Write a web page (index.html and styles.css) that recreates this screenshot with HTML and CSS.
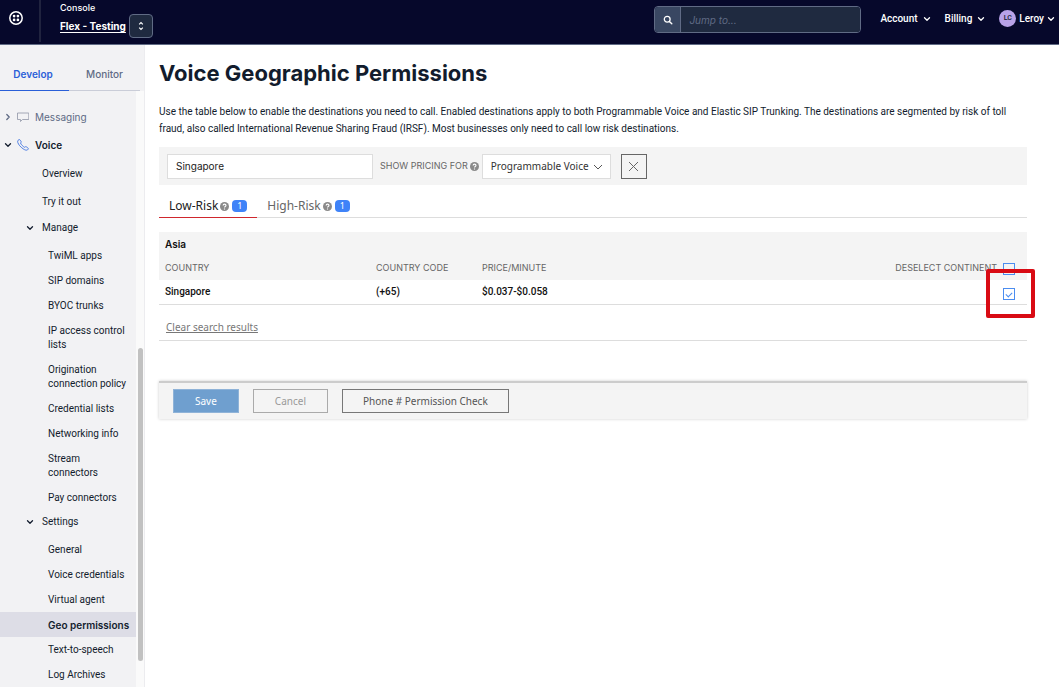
FILE: index.html
```html
<!DOCTYPE html>
<html lang="en">
<head>
<meta charset="utf-8">
<title>Voice Geographic Permissions</title>
<link rel="stylesheet" href="styles.css">
</head>
<body>
<svg class="defs" aria-hidden="true">
  <symbol id="chev" viewBox="0 0 8 8"><path d="M1.5 2.8 4 5.2l2.500-2.400" fill="none" stroke="currentColor" stroke-width="1.300" stroke-linecap="round" stroke-linejoin="round"/></symbol>
  <symbol id="help" viewBox="0 0 8 8"><circle cx="4" cy="4" r="4" fill="#8a8a8a"/><path d="M2.800 3.200c0-1.700 2.500-1.700 2.500 0 0 .8-1.300.8-1.300 1.700M4 5.800v.8" fill="none" stroke="#fff" stroke-width="1"/></symbol>
</svg>
<header class="topbar">
  <a class="logo" href="#" aria-label="Home">
    <svg width="14" height="14" viewBox="0 0 14 14"><circle cx="7" cy="7" r="6.200" fill="none" stroke="#fff" stroke-width="1.500"/><g fill="#fff"><circle cx="5.100" cy="5.100" r="1.350"/><circle cx="8.900" cy="5.100" r="1.350"/><circle cx="5.100" cy="8.900" r="1.350"/><circle cx="8.900" cy="8.900" r="1.350"/></g></svg>
  </a>
  <div class="account">
    <div class="account-names"><span class="console">Console</span><a class="project" href="#">Flex - Testing</a></div>
    <button class="switcher" aria-label="Switch account"><svg width="8" height="10" viewBox="0 0 8 10"><path d="M2.200 3.300 4 1.500l1.800 1.800M2.200 6.700 4 8.500l1.800-1.800" fill="none" stroke="#fff" stroke-width="1.200"/></svg></button>
  </div>
  <div class="search">
    <button class="search-btn" aria-label="Search"><svg width="10" height="10" viewBox="0 0 10 10"><circle cx="4.200" cy="4.200" r="2.900" fill="none" stroke="#fff" stroke-width="1.300"/><path d="m6.400 6.400 2.400 2.400" stroke="#fff" stroke-width="1.400" stroke-linecap="round"/></svg></button>
    <input class="search-input" type="text" placeholder="Jump to..." aria-label="Jump to">
  </div>
  <nav class="topmenu">
    <button class="menu-btn">Account <svg class="chev"><use href="#chev"/></svg></button>
    <button class="menu-btn">Billing <svg class="chev"><use href="#chev"/></svg></button>
    <button class="menu-btn user"><span class="avatar">LC</span>Leroy <svg class="chev"><use href="#chev"/></svg></button>
  </nav>
</header>
<div class="shell">
  <aside class="sidebar">
    <div class="side-tabs"><a class="side-tab on" href="#">Develop</a><a class="side-tab" href="#">Monitor</a></div>
    <div class="side-body">
      <nav class="tree">
        <a class="l1 muted" href="#"><svg class="chev right"><use href="#chev"/></svg><svg class="picto" viewBox="0 0 12 12"><path d="M.5 2h11.300v6.500H5.500L3.500 10.500v-2H.5z" fill="none" stroke="#8f94a6" stroke-width=".8" stroke-linejoin="round"/></svg>Messaging</a>
        <a class="l1 strong" href="#"><svg class="chev"><use href="#chev"/></svg><svg class="picto" viewBox="0 0 12 12"><path d="M1.200 1.200c.8-1 1.400-.9 2 0l.9 1.300c.3.600-.2 1-.6 1.500.6 1.600 2.700 3.700 4.200 4.300.5-.4 1-.9 1.600-.5l1.400 1c.9.700.9 1.200-.1 2-.9.700-2.500.4-4.500-1C3.300 7.900 1.600 5.700.8 3.500.5 2.500.7 1.800 1.200 1.200z" fill="none" stroke="#3d72e0" stroke-width=".9" stroke-linejoin="round"/></svg>Voice</a>
        <a class="l2" href="#">Overview</a>
        <a class="l2" href="#">Try it out</a>
        <a class="group" href="#"><svg class="chev"><use href="#chev"/></svg>Manage</a>
        <a class="l3" href="#">TwiML apps</a>
        <a class="l3" href="#">SIP domains</a>
        <a class="l3" href="#">BYOC trunks</a>
        <a class="l3" href="#">IP access control lists</a>
        <a class="l3" href="#">Origination connection policy</a>
        <a class="l3" href="#">Credential lists</a>
        <a class="l3" href="#">Networking info</a>
        <a class="l3" href="#">Stream connectors</a>
        <a class="l3" href="#">Pay connectors</a>
        <a class="group" href="#"><svg class="chev"><use href="#chev"/></svg>Settings</a>
        <a class="l3" href="#">General</a>
        <a class="l3" href="#">Voice credentials</a>
        <a class="l3" href="#">Virtual agent</a>
        <a class="l3 current" href="#">Geo permissions</a>
        <a class="l3" href="#">Text-to-speech</a>
        <a class="l3" href="#">Log Archives</a>
      </nav>
      <div class="track"><div class="thumb"></div></div>
    </div>
  </aside>
  <main class="content">
    <h1 class="title">Voice Geographic Permissions</h1>
    <p class="intro">Use the table below to enable the destinations you need to call. Enabled destinations apply to both Programmable Voice and Elastic SIP Trunking. The destinations are segmented by risk of toll fraud, also called International Revenue Sharing Fraud (IRSF). Most businesses only need to call low risk destinations.</p>
    <form class="filters">
      <input class="country" type="text" value="Singapore" aria-label="Country">
      <label class="pricing-label" for="pricing">SHOW PRICING FOR <svg class="help"><use href="#help"/></svg></label>
      <span class="select-wrap"><select class="pricing" id="pricing"><option>Programmable Voice</option></select><svg class="select-chev" viewBox="0 0 10 6"><path d="m1 1 4 4 4-4" fill="none" stroke="#555"/></svg></span>
      <button class="clear" type="button" aria-label="Clear"><svg width="11" height="11" viewBox="0 0 11 11"><path d="m1 1 9 9m0-9-9 9" stroke="#666" stroke-width="1"/></svg></button>
    </form>
    <div class="tabs">
      <a class="tab active" href="#">Low-Risk <svg class="help"><use href="#help"/></svg><span class="badge">1</span></a>
      <a class="tab" href="#">High-Risk <svg class="help"><use href="#help"/></svg><span class="badge">1</span></a>
    </div>
    <table class="grid">
      <colgroup><col class="c-country"><col class="c-code"><col></colgroup>
      <thead>
        <tr><th class="continent" colspan="3">Asia</th></tr>
        <tr><th>COUNTRY</th><th>COUNTRY CODE</th><th><div class="split">PRICE/MINUTE<label class="deselect">DESELECT CONTINENT<input class="box" type="checkbox"></label></div></th></tr>
      </thead>
      <tbody>
        <tr><td>Singapore</td><td>(+65)</td><td><div class="split">$0.037-$0.058<span class="pick"><input class="box" type="checkbox" checked aria-label="Enable Singapore"><span class="callout"></span></span></div></td></tr>
      </tbody>
    </table>
    <div class="results"><a class="reset" href="#">Clear search results</a></div>
    <div class="actions">
      <button class="btn save">Save</button>
      <button class="btn cancel">Cancel</button>
      <button class="btn">Phone # Permission Check</button>
    </div>
  </main>
</div>
</body>
</html>
```
FILE: styles.css
```css
* { box-sizing: border-box; }
body { margin: 0; min-height: 100vh; display: flex; flex-direction: column; font: 10px/14px Inter, "Liberation Sans", sans-serif; color: #121c2d; background: #fff; }
a { color: inherit; text-decoration: none; }
button, input, select { font: inherit; color: inherit; margin: 0; }
button { cursor: pointer; }
.defs { position: absolute; width: 0; height: 0; }
.chev { width: 8px; height: 8px; flex: none; }
.right { transform: rotate(-90deg); }
.help { width: 9px; height: 9px; flex: none; }

.topbar { display: flex; align-items: flex-start; height: 45px; background: #06082b; border-bottom: 1px solid #606b85; color: #fff; }
.logo { width: 41px; height: 42px; padding: 11px 0 0 9px; border-right: 2px solid #20233f; }
.account { display: flex; align-items: flex-end; gap: 4px; padding-left: 19px; }
.account-names { display: flex; flex-direction: column; width: 65px; height: 38px; white-space: nowrap; }
.console { font-size: 9px; font-weight: 500; height: 19px; line-height: 15px; }
.project { font-weight: 700; text-decoration: underline; text-underline-offset: 2px; }
.switcher { width: 24px; height: 24px; padding: 0; display: grid; place-items: center; background: #1f2a40; border: 1px solid #606b85; border-radius: 4px; }
.search { display: flex; width: 207px; height: 27px; margin: 6px 19px 0 auto; border: 1px solid #606b85; border-radius: 4px; overflow: hidden; }
.search-btn { width: 26px; padding: 0; border: 0; border-right: 1px solid #606b85; background: #394762; display: grid; place-items: center; }
.search-input { flex: 1; min-width: 0; padding: 0 8px; border: 0; background: #1f2a40; }
.search-input::placeholder { color: #606b85; font-style: italic; opacity: 1; }
.topmenu { display: flex; align-items: center; gap: 14px; height: 37px; padding-right: 4px; }
.menu-btn { display: flex; align-items: center; gap: 5px; padding: 0; border: 0; background: none; font-family: Roboto, sans-serif; font-weight: 500; white-space: nowrap; }
.user { gap: 3px; }
.avatar { width: 17px; height: 17px; border-radius: 50%; background: #b8a2e8; color: #121c2d; font-size: 7px; line-height: 17px; text-align: center; }

.shell { display: flex; flex: 1; }
.sidebar { width: 145px; flex: none; display: flex; flex-direction: column; background: #f2f2f4; border-right: 1px solid #ececef; }
.side-tabs { display: flex; height: 46px; margin-right: 4px; border-bottom: 1px solid #cacdd8; }
.side-tab { flex: 1; height: 46px; padding-top: 22px; text-align: center; font-weight: 500; color: #606b85; }
.side-tab.on { flex: none; width: 69px; padding-right: 3px; color: #2a5fd8; font-weight: 600; border-bottom: 1px solid #2a5fd8; }
.side-body { display: flex; flex: 1; }
.tree { flex: 1; display: flex; flex-direction: column; padding-top: 13px; font-family: Roboto, sans-serif; }
.tree a { display: flex; align-items: center; }
.l1 { height: 28px; padding: 0 0 2px 4px; gap: 5px; }
.muted { color: #606b85; font-family: Inter, sans-serif; }
.strong { font-family: Inter, sans-serif; font-weight: 600; }
.picto { width: 12px; height: 12px; margin-right: 1px; }
.l2 { height: 28px; padding: 0 0 1px 42px; }
.group { height: 27px; padding: 0 0 4px 26px; gap: 8px; }
.tree .l3 { padding: 6px 4px 5px 48px; }
.current { background: #dddde6; font-family: Inter, sans-serif; font-weight: 600; white-space: nowrap; }
.track { width: 8px; flex: none; background: #fafafa; padding: 257px 1px 26px 2px; display: flex; }
.thumb { flex: 1; border-radius: 3px; background: #c1c1c1; }

.content { flex: 1; min-width: 0; padding: 14px 32px 0 14px; }
.title { margin: 0; font-size: 22px; line-height: 28px; font-weight: 700; }
.intro { margin: 16px 0 10px; line-height: 17px; font-family: Roboto, sans-serif; }
.filters { display: flex; align-items: center; height: 38px; padding: 0 8px; background: #f4f4f4; }
.country { width: 206px; height: 25px; padding: 0 8px; border: 1px solid #ddd; background: #fff; color: #222; }
.pricing-label { display: flex; align-items: center; gap: 2px; margin: 0 3px 0 7px; font-size: 9px; color: #666; font-weight: 400; white-space: nowrap; }
.select-wrap { position: relative; }
.pricing { display: block; width: 129px; height: 25px; padding: 0 8px; border: 1px solid #ddd; border-radius: 0; background: #fff; appearance: none; font: 10px/14px "Noto Sans", sans-serif; color: #333; }
.select-chev { position: absolute; right: 8px; top: 10px; width: 10px; height: 6px; pointer-events: none; }
.clear { width: 26px; height: 25px; margin-left: 10px; padding: 0; display: grid; place-items: center; border: 1px solid #666; background: #f4f4f4; }
.tabs { display: flex; margin-top: 10px; border-bottom: 1px solid #ddd; font: 12px/16px "Noto Sans", sans-serif; color: #666; }
.tab { display: flex; align-items: center; gap: 2px; height: 23px; padding: 0 10px; margin-bottom: -1px; border-bottom: 1px solid transparent; }
.active { color: #222; border-bottom-color: #cf272d; }
.badge { width: 15px; height: 12px; margin-left: 1px; border-radius: 4px; background: #3f83f8; color: #fff; font-size: 9px; line-height: 12px; text-align: center; }
.grid { width: 100%; margin-top: 14px; border-collapse: collapse; table-layout: fixed; color: #111; }
.c-country { width: 211px; }
.c-code { width: 106px; }
.grid th, .grid td { height: 24px; padding: 0 6px; text-align: left; }
.grid th { background: #f4f4f4; color: #666; font-size: 9px; font-weight: 400; }
.grid .continent { color: #111; font-size: 10px; font-weight: 600; }
.grid td { font-family: Roboto, sans-serif; font-weight: 500; border-bottom: 1px solid #ddd; }
.split { display: flex; justify-content: space-between; align-items: center; padding-right: 6px; }
.deselect { display: flex; gap: 6px; }
.box { appearance: none; width: 12px; height: 12px; border: 1px solid #4b8df0; display: grid; place-items: center; margin-top: 2px; }
.box:checked::after { content: ""; width: 5px; height: 3px; border: solid #4b8df0; border-width: 0 0 1px 1px; transform: rotate(-45deg); }
.pick { position: relative; padding-top: 3px; }
.callout { position: absolute; left: -17px; top: -14px; width: 49px; height: 49px; border: 4px solid #d90b14; border-radius: 2px; pointer-events: none; }
.results { height: 36px; padding: 14px 7px 0; border-bottom: 1px solid #ddd; font: 10px/16px "Noto Sans", sans-serif; color: #777; }
.reset { text-decoration: underline; }
.actions { display: flex; gap: 14px; margin-top: 40px; padding: 6px 14px; background: #f4f4f4; border-top: 2px solid #ccc; box-shadow: 0 0 3px #ccc; }
.btn { height: 24px; padding: 0 20px; border: 1px solid #777; background: #f4f4f4; color: #555; font: 10px/14px "Noto Sans", sans-serif; }
.save { padding: 0 21px; border-color: #8fb3d8; background: #6f9fcf; color: #fff; }
.cancel { padding: 0 21px; border-color: #aaa; color: #999; }
```
